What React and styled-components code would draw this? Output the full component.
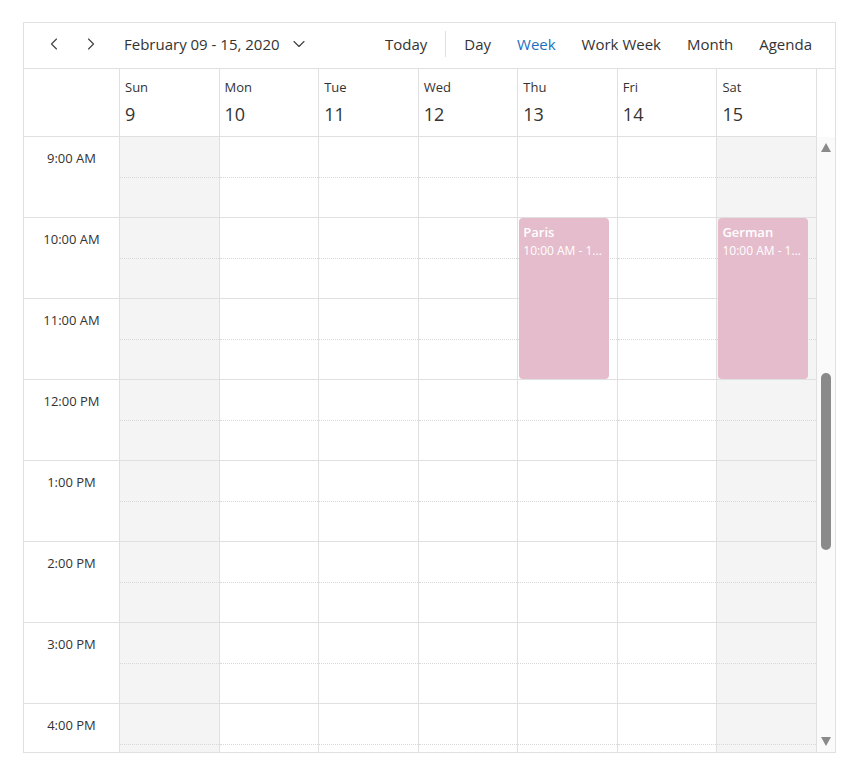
import React from "react";
import styled, { createGlobalStyle } from "styled-components";
import { ChevronLeft, ChevronRight, ChevronDown } from "lucide-react";

const GlobalStyle = createGlobalStyle`
  body {
    margin: 0;
    background: #fff;
    font-family: "Open Sans", "Noto Sans", sans-serif;
    color: #333;
  }
`;

const HOUR_HEIGHT = 81;

const hours = [
  "9:00 AM",
  "10:00 AM",
  "11:00 AM",
  "12:00 PM",
  "1:00 PM",
  "2:00 PM",
  "3:00 PM",
  "4:00 PM",
];

const days = [
  { label: "Sun", date: 9, weekend: true },
  { label: "Mon", date: 10 },
  { label: "Tue", date: 11 },
  { label: "Wed", date: 12 },
  { label: "Thu", date: 13 },
  { label: "Fri", date: 14 },
  { label: "Sat", date: 15, weekend: true },
];

const events = [
  { day: 4, title: "Paris", time: "10:00 AM - 1...", start: 1, length: 2 },
  { day: 6, title: "German", time: "10:00 AM - 1...", start: 1, length: 2 },
];

const views = ["Day", "Week", "Work Week", "Month", "Agenda"];

export default function App() {
  return (
    <Page>
      <GlobalStyle />
      <Scheduler>
        <Toolbar>
          <NavGroup>
            <IconButton>
              <ChevronLeft size={20} strokeWidth={1.4} />
            </IconButton>
            <IconButton>
              <ChevronRight size={20} strokeWidth={1.4} />
            </IconButton>
            <DateRange>
              February 09 - 15, 2020
              <ChevronDown size={20} strokeWidth={1.4} />
            </DateRange>
          </NavGroup>
          <ViewGroup>
            <ViewButton>Today</ViewButton>
            <Divider />
            {views.map((v) => (
              <ViewButton key={v} active={v === "Week"}>
                {v}
              </ViewButton>
            ))}
          </ViewGroup>
        </Toolbar>

        <HeaderRow>
          <GutterHead />
          {days.map((d) => (
            <DayHead key={d.label}>
              <DayName>{d.label}</DayName>
              <DayNumber>{d.date}</DayNumber>
            </DayHead>
          ))}
          <ScrollSpacer />
        </HeaderRow>

        <Body>
          <Grid>
            <Gutter>
              {hours.map((h) => (
                <TimeCell key={h}>{h}</TimeCell>
              ))}
            </Gutter>
            {days.map((d, i) => (
              <DayColumn key={d.label} weekend={d.weekend}>
                {hours.map((h) => (
                  <HourBlock key={h}>
                    <HalfSlot />
                    <HalfSlot last />
                  </HourBlock>
                ))}
                {events
                  .filter((e) => e.day === i)
                  .map((e) => (
                    <Event
                      key={e.title}
                      style={{
                        top: e.start * HOUR_HEIGHT,
                        height: e.length * HOUR_HEIGHT - 1,
                      }}
                    >
                      <EventTitle>{e.title}</EventTitle>
                      <EventTime>{e.time}</EventTime>
                    </Event>
                  ))}
              </DayColumn>
            ))}
          </Grid>
          <Scrollbar>
            <Arrow up />
            <Thumb offset={221} />
            <Arrow />
          </Scrollbar>
        </Body>
      </Scheduler>
    </Page>
  );
}

const Page = styled.div`
  padding: 22px 0 0 23px;
`;

const Scheduler = styled.div`
  width: 813px;
  height: 731px;
  box-sizing: border-box;
  border: 1px solid #e0e0e0;
  display: flex;
  flex-direction: column;
  overflow: hidden;
`;

const Toolbar = styled.div`
  height: 46px;
  box-sizing: border-box;
  border-bottom: 1px solid #e0e0e0;
  display: flex;
  align-items: center;
  justify-content: space-between;
  padding: 0 10px 3px 16px;
  flex-shrink: 0;
`;

const NavGroup = styled.div`
  display: flex;
  align-items: center;
`;

const IconButton = styled.div`
  width: 28px;
  height: 28px;
  display: flex;
  align-items: center;
  justify-content: center;
  color: #444;
  margin-right: 9px;
`;

const DateRange = styled.div`
  display: flex;
  align-items: center;
  gap: 9px;
  font-size: 15px;
  line-height: 20px;
  color: #333;
  margin-left: 10px;

  svg {
    color: #444;
  }
`;

const ViewGroup = styled.div`
  display: flex;
  align-items: center;
`;

const ViewButton = styled.div`
  font-size: 15px;
  line-height: 20px;
  padding: 0 13px;
  color: ${(p) => (p.active ? "#1e6fc0" : "#333")};
`;

const Divider = styled.div`
  width: 1px;
  height: 26px;
  background: #e0e0e0;
  margin: 0 5px;
`;

const HeaderRow = styled.div`
  display: grid;
  grid-template-columns: 96px repeat(7, 1fr) 18px;
  height: 68px;
  flex-shrink: 0;
`;

const GutterHead = styled.div`
  border-right: 1px solid #e0e0e0;
  border-bottom: 1px solid #e0e0e0;
`;

const DayHead = styled.div`
  border-right: 1px solid #e0e0e0;
  border-bottom: 1px solid #e0e0e0;
  padding: 9px 5px 0;
`;

const DayName = styled.div`
  font-size: 13px;
  line-height: 18px;
  color: #333;
`;

const DayNumber = styled.div`
  font-size: 18px;
  line-height: 24px;
  margin-top: 6px;
  color: #333;
`;

const ScrollSpacer = styled.div``;

const Body = styled.div`
  flex: 1;
  display: flex;
  min-height: 0;
`;

const Grid = styled.div`
  flex: 1;
  display: grid;
  grid-template-columns: 96px repeat(7, 1fr);
  align-items: start;
  overflow: hidden;
`;

const Gutter = styled.div`
  border-right: 1px solid #e0e0e0;
`;

const TimeCell = styled.div`
  height: ${HOUR_HEIGHT}px;
  box-sizing: border-box;
  border-bottom: 1px solid #e0e0e0;
  text-align: center;
  font-size: 13px;
  line-height: 18px;
  padding-top: 12px;
  color: #333;
`;

const DayColumn = styled.div`
  position: relative;
  border-right: 1px solid #e0e0e0;
  background: ${(p) => (p.weekend ? "#f4f4f4" : "#fff")};
`;

const HourBlock = styled.div`
  height: ${HOUR_HEIGHT}px;
  display: flex;
  flex-direction: column;
`;

const HalfSlot = styled.div`
  box-sizing: border-box;
  height: ${(p) => (p.last ? 40 : 41)}px;
  border-bottom: 1px ${(p) => (p.last ? "solid" : "dotted")}
    ${(p) => (p.last ? "#e0e0e0" : "#d8d8d8")};
`;

const Event = styled.div`
  position: absolute;
  left: 1px;
  right: 8px;
  box-sizing: border-box;
  background: #e5bccb;
  border-radius: 4px;
  padding: 5px 4px;
  color: #fff;
  overflow: hidden;
`;

const EventTitle = styled.div`
  font-size: 13px;
  font-weight: 600;
  line-height: 18px;
`;

const EventTime = styled.div`
  font-size: 12px;
  line-height: 16px;
  margin-top: 2px;
  white-space: nowrap;
`;

const Scrollbar = styled.div`
  width: 18px;
  background: #fafafa;
  display: flex;
  flex-direction: column;
  align-items: center;
  padding: 6px 0;
  box-sizing: border-box;
`;

const Arrow = styled.div`
  width: 0;
  height: 0;
  border-left: 5px solid transparent;
  border-right: 5px solid transparent;
  ${(p) =>
    p.up
      ? "border-bottom: 9px solid #8a8a8a;"
      : "border-top: 9px solid #8a8a8a; margin-top: auto;"}
`;

const Thumb = styled.div`
  width: 10px;
  height: 177px;
  border-radius: 5px;
  background: #8a8a8a;
  margin-top: ${(p) => p.offset}px;
`;
